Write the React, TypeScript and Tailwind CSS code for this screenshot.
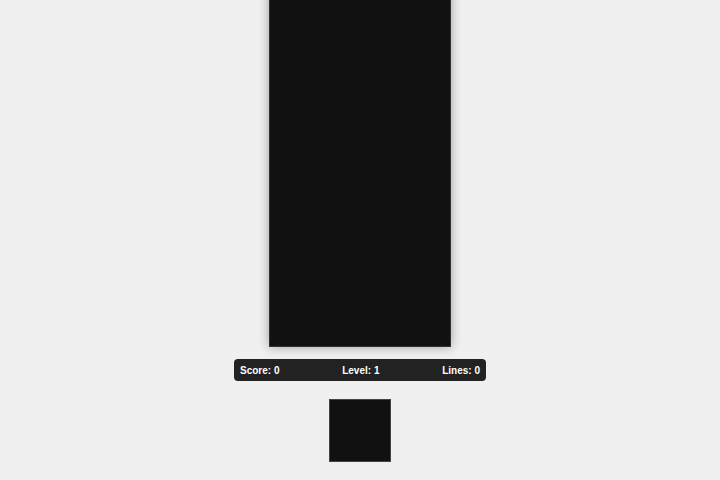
export default function App() {
  return (
    <div className="h-screen overflow-hidden bg-[#f0f0f0] flex flex-col items-center justify-center pb-[33px] font-['Liberation_Sans',Arial,sans-serif]">
      <div className="w-[182px] h-[362px] shrink-0 bg-[#111111] border border-[#333333] shadow-[0_0_10px_rgba(0,0,0,0.35)]" />
      <div className="mt-[12px] w-[252px] h-[22px] shrink-0 rounded-[4px] bg-[#222222] px-[6px] flex items-center justify-between text-white text-[10px] font-bold">
        <span>Score: 0</span>
        <span>Level: 1</span>
        <span>Lines: 0</span>
      </div>
      <div className="mt-[18px] w-[62px] h-[63px] shrink-0 bg-[#111111] border border-[#444444]" />
    </div>
  );
}
